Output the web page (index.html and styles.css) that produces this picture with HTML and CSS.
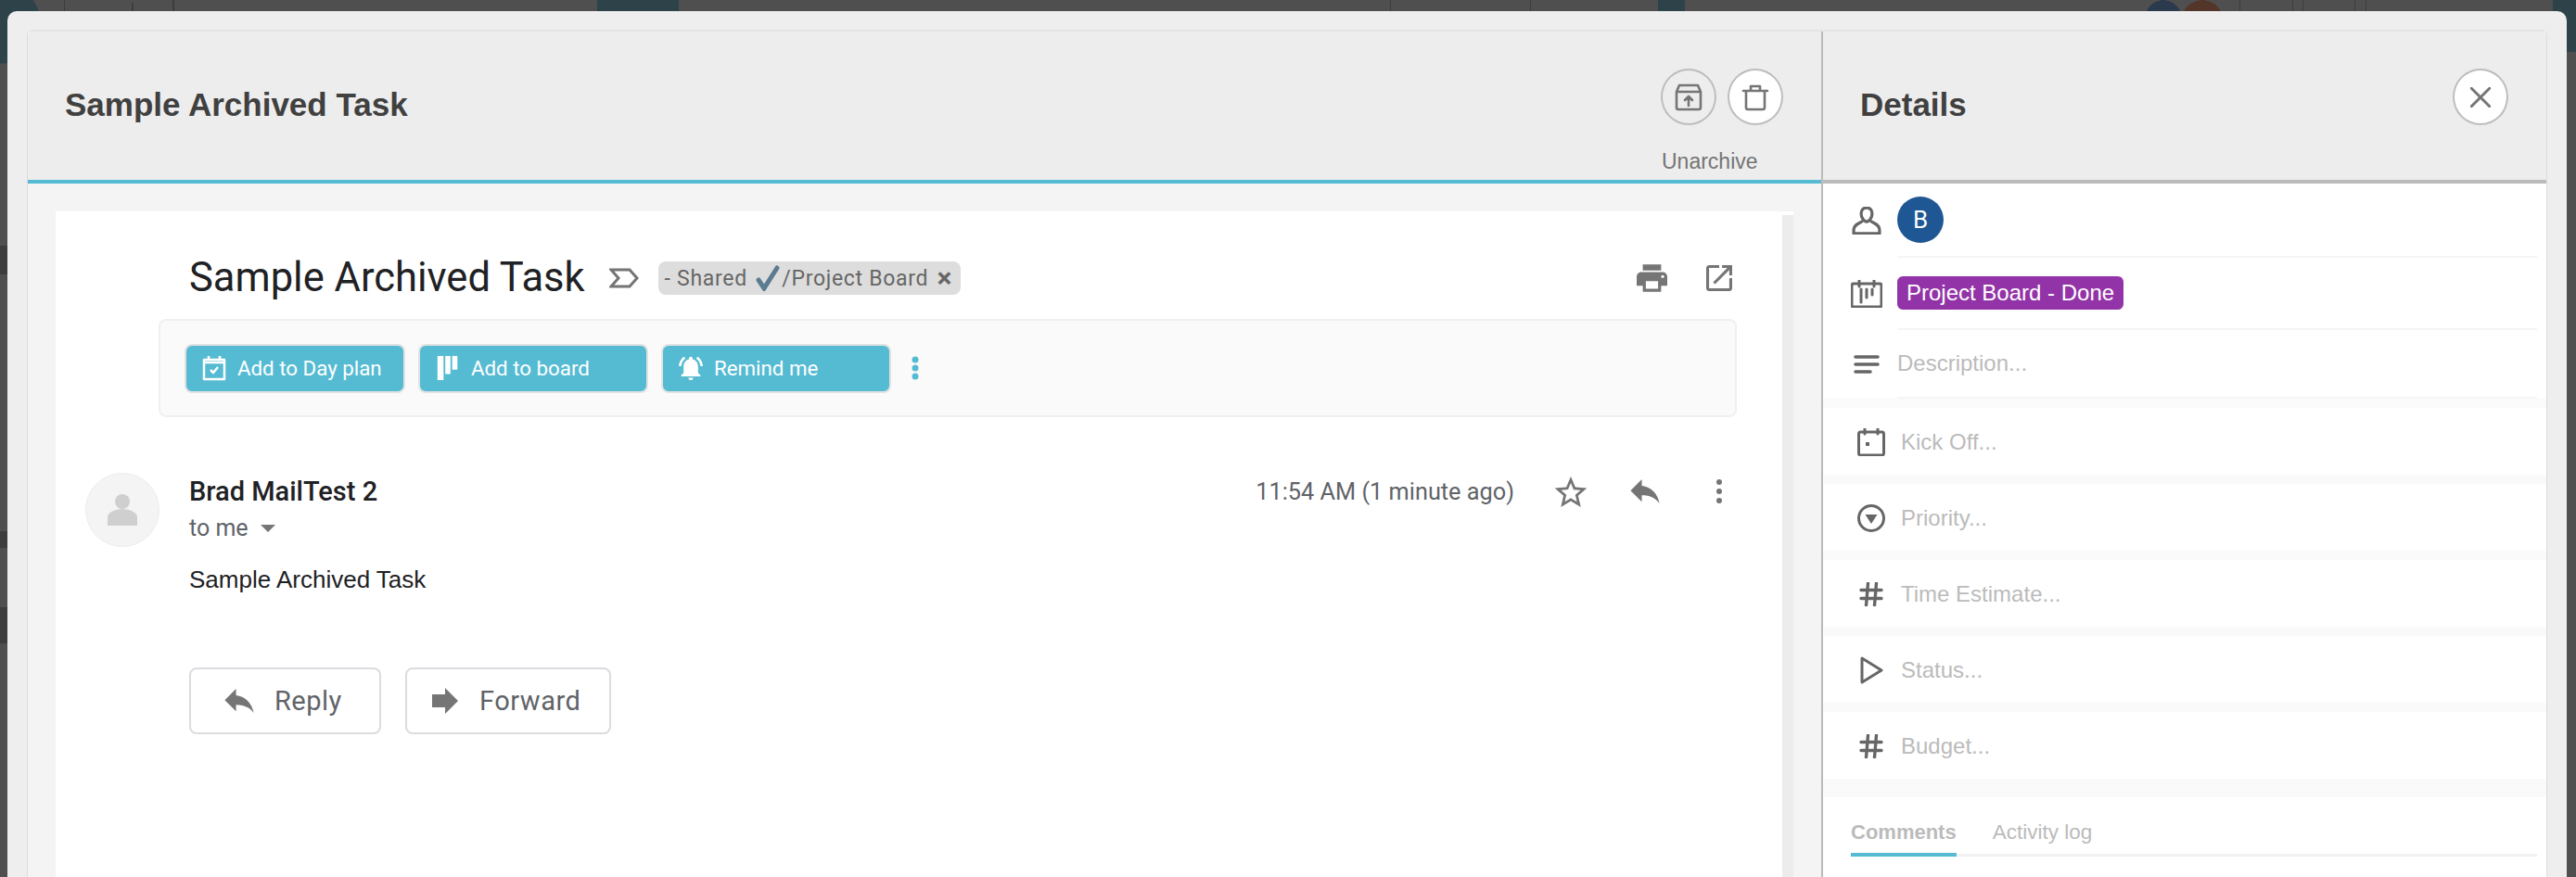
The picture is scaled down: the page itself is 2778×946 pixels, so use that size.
FILE: index.html
```html
<!DOCTYPE html>
<html lang="en">

<head>
    <meta charset="UTF-8">
    <meta name="viewport" content="width=device-width, initial-scale=1.0">
    <title>Sample Archived Task</title>
    <link rel="stylesheet" href="styles.css">
</head>

<body>
    <div class="modal">
        <div class="panel">
            <!-- Left column: the mail -->
            <div class="main">
                <div class="main-head">
                    <h2 class="head-title">Sample Archived Task</h2>
                    <div class="head-actions">
                        <div class="round-buttons">
                            <button class="round-btn">
                                <svg class="round-ic" viewBox="0 0 30 30"><path d="M2 9l3-7h20l3 7M2 9h26v17a2 2 0 0 1-2 2H4a2 2 0 0 1-2-2zM15 24V14M11 18l4-4 4 4"/></svg>
                            </button>
                            <button class="round-btn white">
                                <svg class="round-ic" viewBox="0 0 30 30"><path d="M2 8h26M10 8V3h10v5M5 8v18a2 2 0 0 0 2 2h16a2 2 0 0 0 2-2V8"/></svg>
                            </button>
                        </div>
                        <div class="unarchive">Unarchive</div>
                    </div>
                </div>
                <div class="main-body">
                    <div class="mail">
                        <div class="subject-row">
                            <h1 class="subject">Sample Archived Task</h1>
                            <svg class="label-ic" viewBox="0 0 32 24"><path d="M2 3h20l8 9-8 9H2l8-9z"/></svg>
                            <span class="chip">- Shared <svg class="check" viewBox="0 0 26 28"><path d="M3 16l6 9L23 3"/></svg>/Project Board <b>×</b></span>
                            <span class="subject-icons">
                                <svg class="print" viewBox="2 3 20 18"><path d="M19 8H5c-1.660 0-3 1.340-3 3v6h4v4h12v-4h4v-6c0-1.660-1.340-3-3-3zm-3 11H8v-5h8v5zm3-7c-.55 0-1-.45-1-1s.45-1 1-1 1 .45 1 1-.45 1-1 1zm-1-9H6v4h12V3z"/></svg>
                                <svg class="open" viewBox="3 3 18 18"><path d="M19 19H5V5h7V3H5c-1.110 0-2 .9-2 2v14c0 1.100.89 2 2 2h14c1.100 0 2-.9 2-2v-7h-2v7zM14 3v2h3.590l-9.830 9.830 1.410 1.410L19 6.410V10h2V3h-7z"/></svg>
                            </span>
                        </div>
                        <div class="action-box">
                            <button class="act-btn day">
                                <svg class="act-ic" viewBox="0 0 26 28"><path d="M2 5h22v21H2zM7 1v5M19 1v5M2 8h22M9 16l3 3 5-6"/></svg>
                                Add to Day plan
                            </button>
                            <button class="act-btn">
                                <svg class="act-ic solid" viewBox="0 0 24 30"><path d="M0 1h7v28H0zM9 1h6v21H9zM17 1h6v16h-6z"/></svg>
                                Add to board
                            </button>
                            <button class="act-btn">
                                <svg class="act-ic solid" viewBox="2 2 20 20"><path d="M7.580 4.080L6.150 2.650C3.750 4.480 2.170 7.300 2.030 10.500h2c.15-2.650 1.510-4.970 3.550-6.420zm12.390 6.420h2c-.15-3.200-1.730-6.020-4.120-7.850l-1.420 1.430c2.020 1.450 3.390 3.770 3.540 6.420zM18 11c0-3.070-1.640-5.640-4.500-6.320V4c0-.83-.67-1.500-1.500-1.500s-1.500.67-1.500 1.500v.68C7.630 5.360 6 7.920 6 11v5l-2 2v1h16v-1l-2-2v-5zm-6 11c.14 0 .27-.01.4-.04.65-.14 1.180-.58 1.440-1.180.1-.24.15-.5.15-.78h-4c.01 1.100.9 2 2.010 2z"/></svg>
                                Remind me
                            </button>
                            <svg class="kebab-blue" viewBox="0 0 8 26"><circle cx="4" cy="4" r="3.5"/><circle cx="4" cy="13" r="3.5"/><circle cx="4" cy="22" r="3.5"/></svg>
                        </div>
                        <div class="message">
                            <div class="sender-pic">
                                <svg viewBox="0 0 32 34"><ellipse cx="16" cy="8" rx="8" ry="8"/><path d="M0 34v-9a16 9 0 0 1 32 0v9z"/></svg>
                            </div>
                            <div class="message-main">
                                <div class="message-top">
                                    <div>
                                        <div class="sender">Brad MailTest 2</div>
                                        <div class="to-me">to me <i class="caret"></i></div>
                                    </div>
                                    <div class="message-meta">
                                        <span class="time">11:54 AM (1 minute ago)</span>
                                        <svg class="star" viewBox="2 2 20 19"><path d="M22 9.240l-7.190-.62L12 2 9.190 8.630 2 9.240l5.460 4.730L5.820 21 12 17.270 18.180 21l-1.630-7.030L22 9.240zM12 15.400l-3.760 2.270 1-4.280-3.320-2.880 4.380-.38L12 6.100l1.710 4.040 4.380.38-3.320 2.880 1 4.280L12 15.400z"/></svg>
                                        <svg class="reply-top" viewBox="3 5 18 15"><path d="M10 9V5l-7 7 7 7v-4.100c5 0 8.500 1.600 11 5.100-1-5-4-10-11-11z"/></svg>
                                        <svg class="kebab" viewBox="0 0 8 28"><circle cx="4" cy="4" r="3"/><circle cx="4" cy="14" r="3"/><circle cx="4" cy="24" r="3"/></svg>
                                    </div>
                                </div>
                                <p class="message-text">Sample Archived Task</p>
                                <div class="reply-row">
                                    <button class="reply-btn reply">
                                        <svg viewBox="3 5 18 15"><path d="M10 9V5l-7 7 7 7v-4.100c5 0 8.500 1.600 11 5.100-1-5-4-10-11-11z"/></svg>
                                        Reply
                                    </button>
                                    <button class="reply-btn forward">
                                        <svg viewBox="4 4 16 16"><path d="M12 8V4l8 8-8 8v-4H4V8z"/></svg>
                                        Forward
                                    </button>
                                </div>
                            </div>
                        </div>
                    </div>
                </div>
            </div>

            <!-- Right column: details -->
            <div class="side">
                <div class="side-head">
                    <h2 class="head-title">Details</h2>
                    <button class="round-btn white">
                        <svg class="round-ic close-ic" viewBox="3 3 18 18"><path d="M4 4l16 16M20 4L4 20"/></svg>
                    </button>
                </div>
                <div class="top-fields">
                    <div class="field assignee">
                        <svg class="line-ic person" viewBox="0 0 30 28"><path d="M15 1c3.500 0 5.500 2.500 5.500 6s-2.500 8-5.500 8-5.500-4.500-5.500-8 2-6 5.500-6zM10 15c-4 2-8 4-8 8v4h26v-4c0-4-4-6-8-8"/></svg>
                        <div class="field-val"><span class="avatar">B</span></div>
                    </div>
                    <div class="field board">
                        <svg class="line-ic cal-board" viewBox="0 0 34 30"><rect x="1" y="4" width="32" height="25" rx="2"/><path d="M9 0v7M25 0v7M11 10v14M17 10v9M23 10v6"/></svg>
                        <div class="field-val"><span class="board-tag">Project Board - Done</span></div>
                    </div>
                    <div class="field desc">
                        <svg class="line-ic list" viewBox="0 0 34 20"><path d="M5 2h24M5 10h24M5 18h16"/></svg>
                        <div class="field-val placeholder">Description...</div>
                    </div>
                </div>
                <div class="row"><svg class="line-ic" viewBox="0 0 30 30"><rect x="1.500" y="4" width="27" height="25" rx="2"/><path d="M8 0v6M22 0v6"/><rect class="dot" x="9" y="15" width="4" height="4"/></svg><span class="placeholder">Kick Off...</span></div>
                <div class="row"><svg class="line-ic" viewBox="0 0 30 30"><circle cx="15" cy="15" r="13.500"/><path class="dot" d="M8.500 11h13L15 21z"/></svg><span class="placeholder">Priority...</span></div>
                <div class="row"><svg class="line-ic hash" viewBox="0 0 26 26"><path d="M9.500 1L7.500 25M18.500 1l-2 24M2 8.500h22M2 17.500h22"/></svg><span class="placeholder">Time Estimate...</span></div>
                <div class="row"><svg class="line-ic" viewBox="0 0 30 30"><path d="M5 2l21 13L5 28z"/></svg><span class="placeholder">Status...</span></div>
                <div class="row"><svg class="line-ic hash" viewBox="0 0 26 26"><path d="M9.500 1L7.500 25M18.500 1l-2 24M2 8.500h22M2 17.500h22"/></svg><span class="placeholder">Budget...</span></div>
                <div class="tabs">
                    <div class="tab-bar">
                        <span class="tab active">Comments</span>
                        <span class="tab">Activity log</span>
                    </div>
                </div>
            </div>
        </div>
    </div>
</body>

</html>
```

FILE: styles.css
```css
* {
    box-sizing: border-box;
}

html,
body {
    height: 100%;
}

body {
    margin: 0;
    padding: 12px 10px 0 8px;
    overflow: hidden;
    font-family: "Liberation Sans", Arial, sans-serif;
    /* what little of the page shows behind the modal */
    background:
        radial-gradient(circle 44px at 0 25px, #2d4249 98%, transparent),
        radial-gradient(circle 20px at 2333px 20px, #2b3a4c 98%, transparent),
        radial-gradient(circle 23px at 2375px 23px, #54352a 98%, transparent),
        linear-gradient(#2d4249, #2d4249) 644px 0 / 88px 12px no-repeat,
        linear-gradient(#2d4249, #2d4249) 1788px 0 / 29px 12px no-repeat,
        linear-gradient(#2d4249, #2d4249) 2753px 0 / 25px 56px no-repeat,
        linear-gradient(#3d3d3d, #3d3d3d) 0 265px / 8px 31px no-repeat,
        linear-gradient(#3d3d3d, #3d3d3d) 0 573px / 8px 18px no-repeat,
        linear-gradient(#3d3d3d, #3d3d3d) 0 655px / 8px 39px no-repeat,
        linear-gradient(#3d3d3d, #3d3d3d) 69px 0 / 1px 12px no-repeat,
        linear-gradient(#3d3d3d, #3d3d3d) 142px 3px / 2px 9px no-repeat,
        linear-gradient(#3d3d3d, #3d3d3d) 186px 0 / 2px 12px no-repeat,
        linear-gradient(#3d3d3d, #3d3d3d) 1499px 0 / 1px 12px no-repeat,
        linear-gradient(#3d3d3d, #3d3d3d) 1650px 0 / 1px 12px no-repeat,
        linear-gradient(#3d3d3d, #3d3d3d) 2415px 0 / 1px 12px no-repeat,
        linear-gradient(#3d3d3d, #3d3d3d) 2472px 0 / 1px 12px no-repeat,
        linear-gradient(#3d3d3d, #3d3d3d) 2483px 0 / 1px 12px no-repeat,
        linear-gradient(#3d3d3d, #3d3d3d) 2539px 0 / 1px 12px no-repeat,
        linear-gradient(#3d3d3d, #3d3d3d) 2551px 0 / 1px 12px no-repeat,
        #4f4f4f;
}

svg {
    display: block;
    flex: none;
}

h1,
h2,
p {
    margin: 0;
}

button {
    font-family: inherit;
    cursor: pointer;
}

.modal {
    height: 100%;
    padding: 20px 21px 0;
    background-color: #eeeeee;
    border-radius: 10px 10px 0 0;
}

.panel {
    display: flex;
    height: 100%;
    border-top: 2px solid #e4e4e4;
    border-left: 1px solid #dcdcdc;
    border-right: 1px solid #dcdcdc;
    border-radius: 6px 6px 0 0;
}

/* Left column */
.main {
    display: flex;
    flex-direction: column;
    width: 1934px;
    flex: none;
    background-color: #f4f4f4;
}

.main-head {
    display: flex;
    justify-content: space-between;
    height: 164px;
    padding: 40px 0 0 40px;
    background-color: #ededed;
    border-bottom: 4px solid #55bbd3;
}

.head-title {
    margin-top: 18px;
    font-size: 35px;
    font-weight: bold;
    line-height: 42px;
    color: #404040;
}

.head-actions {
    width: 173px;
}

.round-buttons {
    display: flex;
    gap: 12px;
}

.round-btn {
    display: flex;
    align-items: center;
    justify-content: center;
    width: 60px;
    height: 61px;
    padding: 0;
    background: transparent;
    border: 2px solid #bdbdbd;
    border-radius: 50%;
}

.round-btn.white {
    background-color: #ffffff;
}

.round-ic {
    width: 30px;
    height: 30px;
    fill: none;
    stroke: #757575;
    stroke-width: 2.6;
    stroke-linejoin: round;
    stroke-linecap: round;
}

.unarchive {
    margin: 26px 0 0 1px;
    font-size: 23px;
    line-height: 26px;
    color: #757575;
}

.main-body {
    flex: 1;
    padding: 30px 30px 0;
}

.mail {
    height: 100%;
    padding-top: 52px;
    /* scrollbar track on the right edge, it starts a little below the top */
    background: linear-gradient(#ececec, #ececec) right 0 top 4px / 12px 100% no-repeat, #ffffff;
}

.subject-row {
    display: flex;
    align-items: center;
    height: 40px;
    margin: 0 66px 0 144px;
}

.subject {
    font-family: Roboto, sans-serif;
    font-size: 43.5px;
    font-weight: 400;
    line-height: 40px;
    color: #202124;
}

.label-ic {
    width: 32px;
    height: 24px;
    margin-left: 26px;
    fill: none;
    stroke: #757575;
    stroke-width: 3;
}

.chip {
    display: flex;
    align-items: center;
    height: 36px;
    margin-left: 21px;
    padding: 0 9px 0 7px;
    font-family: Roboto, sans-serif;
    font-size: 23px;
    letter-spacing: 0.7px;
    white-space: pre;
    color: #666666;
    background-color: #dddddd;
    border-radius: 8px;
}

.chip b {
    margin-left: 3px;
    font-size: 30px;
    line-height: 36px;
}

.check {
    width: 26px;
    height: 28px;
    margin: 0 2px 0 3px;
    fill: none;
    stroke: #5b7b90;
    stroke-width: 5;
    stroke-linecap: round;
}

.subject-icons {
    display: flex;
    align-items: center;
    gap: 42px;
    margin-left: auto;
    fill: #757575;
}

.print {
    width: 33px;
    height: 32px;
}

.open {
    width: 28px;
    height: 28px;
}

.action-box {
    display: flex;
    align-items: center;
    width: 1702px;
    height: 106px;
    margin: 24px 0 0 111px;
    padding-left: 26px;
    background-color: #fafafa;
    border: 2px solid #f0f0f0;
    border-radius: 8px;
}

.act-btn {
    display: flex;
    align-items: center;
    gap: 12px;
    width: 248px;
    height: 53px;
    margin-right: 14px;
    padding: 0 0 0 17px;
    font-family: Roboto, sans-serif;
    font-size: 22.3px;
    color: #ffffff;
    background-color: #55bbd3;
    border: 2px solid #e2e2e2;
    border-radius: 8px;
}

.act-btn.day {
    width: 238px;
}

.act-ic {
    width: 26px;
    height: 28px;
    fill: none;
    stroke: #ffffff;
    stroke-width: 2.5;
    stroke-linejoin: round;
}

.act-ic.solid {
    fill: #ffffff;
    stroke: none;
}

.kebab-blue {
    width: 8px;
    height: 26px;
    margin-left: 8px;
    fill: #55bbd3;
}

.message {
    display: flex;
    margin: 60px 0 0 32px;
}

.sender-pic {
    display: flex;
    align-items: center;
    justify-content: center;
    width: 80px;
    height: 80px;
    flex: none;
    background-color: #f4f4f4;
    border: 1px solid #ececec;
    border-radius: 50%;
}

.sender-pic svg {
    width: 32px;
    height: 34px;
    fill: #cfcfcf;
}

.message-main {
    width: 1654px;
    margin-left: 32px;
}

.message-top {
    display: flex;
    justify-content: space-between;
}

.sender {
    margin-top: 2px;
    font-family: Roboto, sans-serif;
    font-size: 29px;
    font-weight: 500;
    line-height: 36px;
    color: #202124;
}

.to-me {
    display: flex;
    align-items: center;
    margin-top: 4px;
    font-family: Roboto, sans-serif;
    font-size: 25px;
    line-height: 36px;
    color: #5f6368;
    white-space: pre;
}

.caret {
    width: 0;
    height: 0;
    margin-left: 7px;
    border-style: solid;
    border-width: 8px 8px 0;
    border-color: #757575 transparent transparent;
}

.message-meta {
    display: flex;
    align-items: center;
    height: 40px;
    fill: #757575;
}

.time {
    font-family: Roboto, sans-serif;
    font-size: 25.3px;
    color: #5f6368;
}

.star {
    width: 36px;
    height: 33px;
    margin-left: 43px;
}

.reply-top {
    width: 32px;
    height: 26px;
    margin-left: 46px;
}

.kebab {
    width: 8px;
    height: 28px;
    margin-left: 60px;
}

.message-text {
    margin-top: 20px;
    font-size: 26px;
    line-height: 34px;
    color: #202124;
}

.reply-row {
    display: flex;
    gap: 26px;
    margin-top: 78px;
}

.reply-btn {
    display: flex;
    align-items: center;
    height: 72px;
    font-family: Roboto, sans-serif;
    font-size: 29px;
    letter-spacing: 0.5px;
    color: #5f6368;
    background-color: #ffffff;
    border: 2px solid #dadce0;
    border-radius: 8px;
    fill: #757575;
}

.reply-btn.reply {
    gap: 22px;
    width: 207px;
    padding-left: 36px;
}

.reply-btn.forward {
    gap: 23px;
    width: 222px;
    padding-left: 27px;
}

.reply-btn.reply svg {
    width: 32px;
    height: 26px;
}

.reply-btn.forward svg {
    width: 28px;
    height: 28px;
}

/* Right column */
.side {
    display: flex;
    flex-direction: column;
    flex: 1;
    background-color: #fafafa;
    border-left: 2px solid #bbbbbb;
}

.side-head {
    display: flex;
    justify-content: space-between;
    flex: none;
    height: 164px;
    padding: 40px 41px 0 40px;
    background-color: #ededed;
    border-bottom: 4px solid #bbbbbb;
}

.close-ic {
    width: 22px;
    height: 22px;
    stroke-width: 2.4;
}

.top-fields {
    flex: none;
    background-color: #ffffff;
}

.field {
    display: flex;
    align-items: center;
}

.assignee {
    height: 80px;
}

.board {
    height: 78px;
}

.desc {
    height: 74px;
}

.field .line-ic {
    width: 34px;
    height: 30px;
    margin: 0 16px 0 30px;
}

.line-ic {
    fill: none;
    stroke: #666666;
    stroke-width: 3;
    stroke-linejoin: round;
    stroke-linecap: round;
}

.line-ic .dot {
    fill: #666666;
    stroke: none;
}

.field .list {
    height: 20px;
    stroke-width: 3.6;
}

.field-val {
    display: flex;
    align-items: center;
    align-self: stretch;
    flex: 1;
    margin-right: 10px;
    border-bottom: 2px solid #f5f5f5;
}

.avatar {
    display: flex;
    align-items: center;
    justify-content: center;
    width: 50px;
    height: 50px;
    font-family: Roboto, sans-serif;
    font-size: 26px;
    color: #ffffff;
    background-color: #1f5795;
    border-radius: 50%;
}

.board-tag {
    display: flex;
    align-items: center;
    height: 36px;
    padding: 0 10px;
    font-size: 24px;
    color: #ffffff;
    background-color: #9333a8;
    border-radius: 6px;
}

.placeholder {
    font-size: 24px;
    color: #bbbbbb;
}

.row {
    display: flex;
    align-items: center;
    flex: none;
    height: 72px;
    margin-top: 10px;
    padding-top: 2px;
    background-color: #ffffff;
}

.row .line-ic {
    width: 30px;
    height: 30px;
    margin: 0 17px 0 37px;
}

.row .hash {
    height: 26px;
    stroke-width: 3.4;
}

.tabs {
    flex: 1;
    margin-top: 20px;
    background-color: #ffffff;
}

.tab-bar {
    display: flex;
    gap: 39px;
    height: 64px;
    margin: 0 10px 0 30px;
    border-bottom: 3px solid #f2f2f2;
}

.tab {
    height: 64px;
    padding-top: 24px;
    font-size: 22.5px;
    line-height: 28px;
    color: #bbbbbb;
}

.tab.active {
    font-size: 22px;
    font-weight: bold;
    border-bottom: 4px solid #55bbd3;
}
```
